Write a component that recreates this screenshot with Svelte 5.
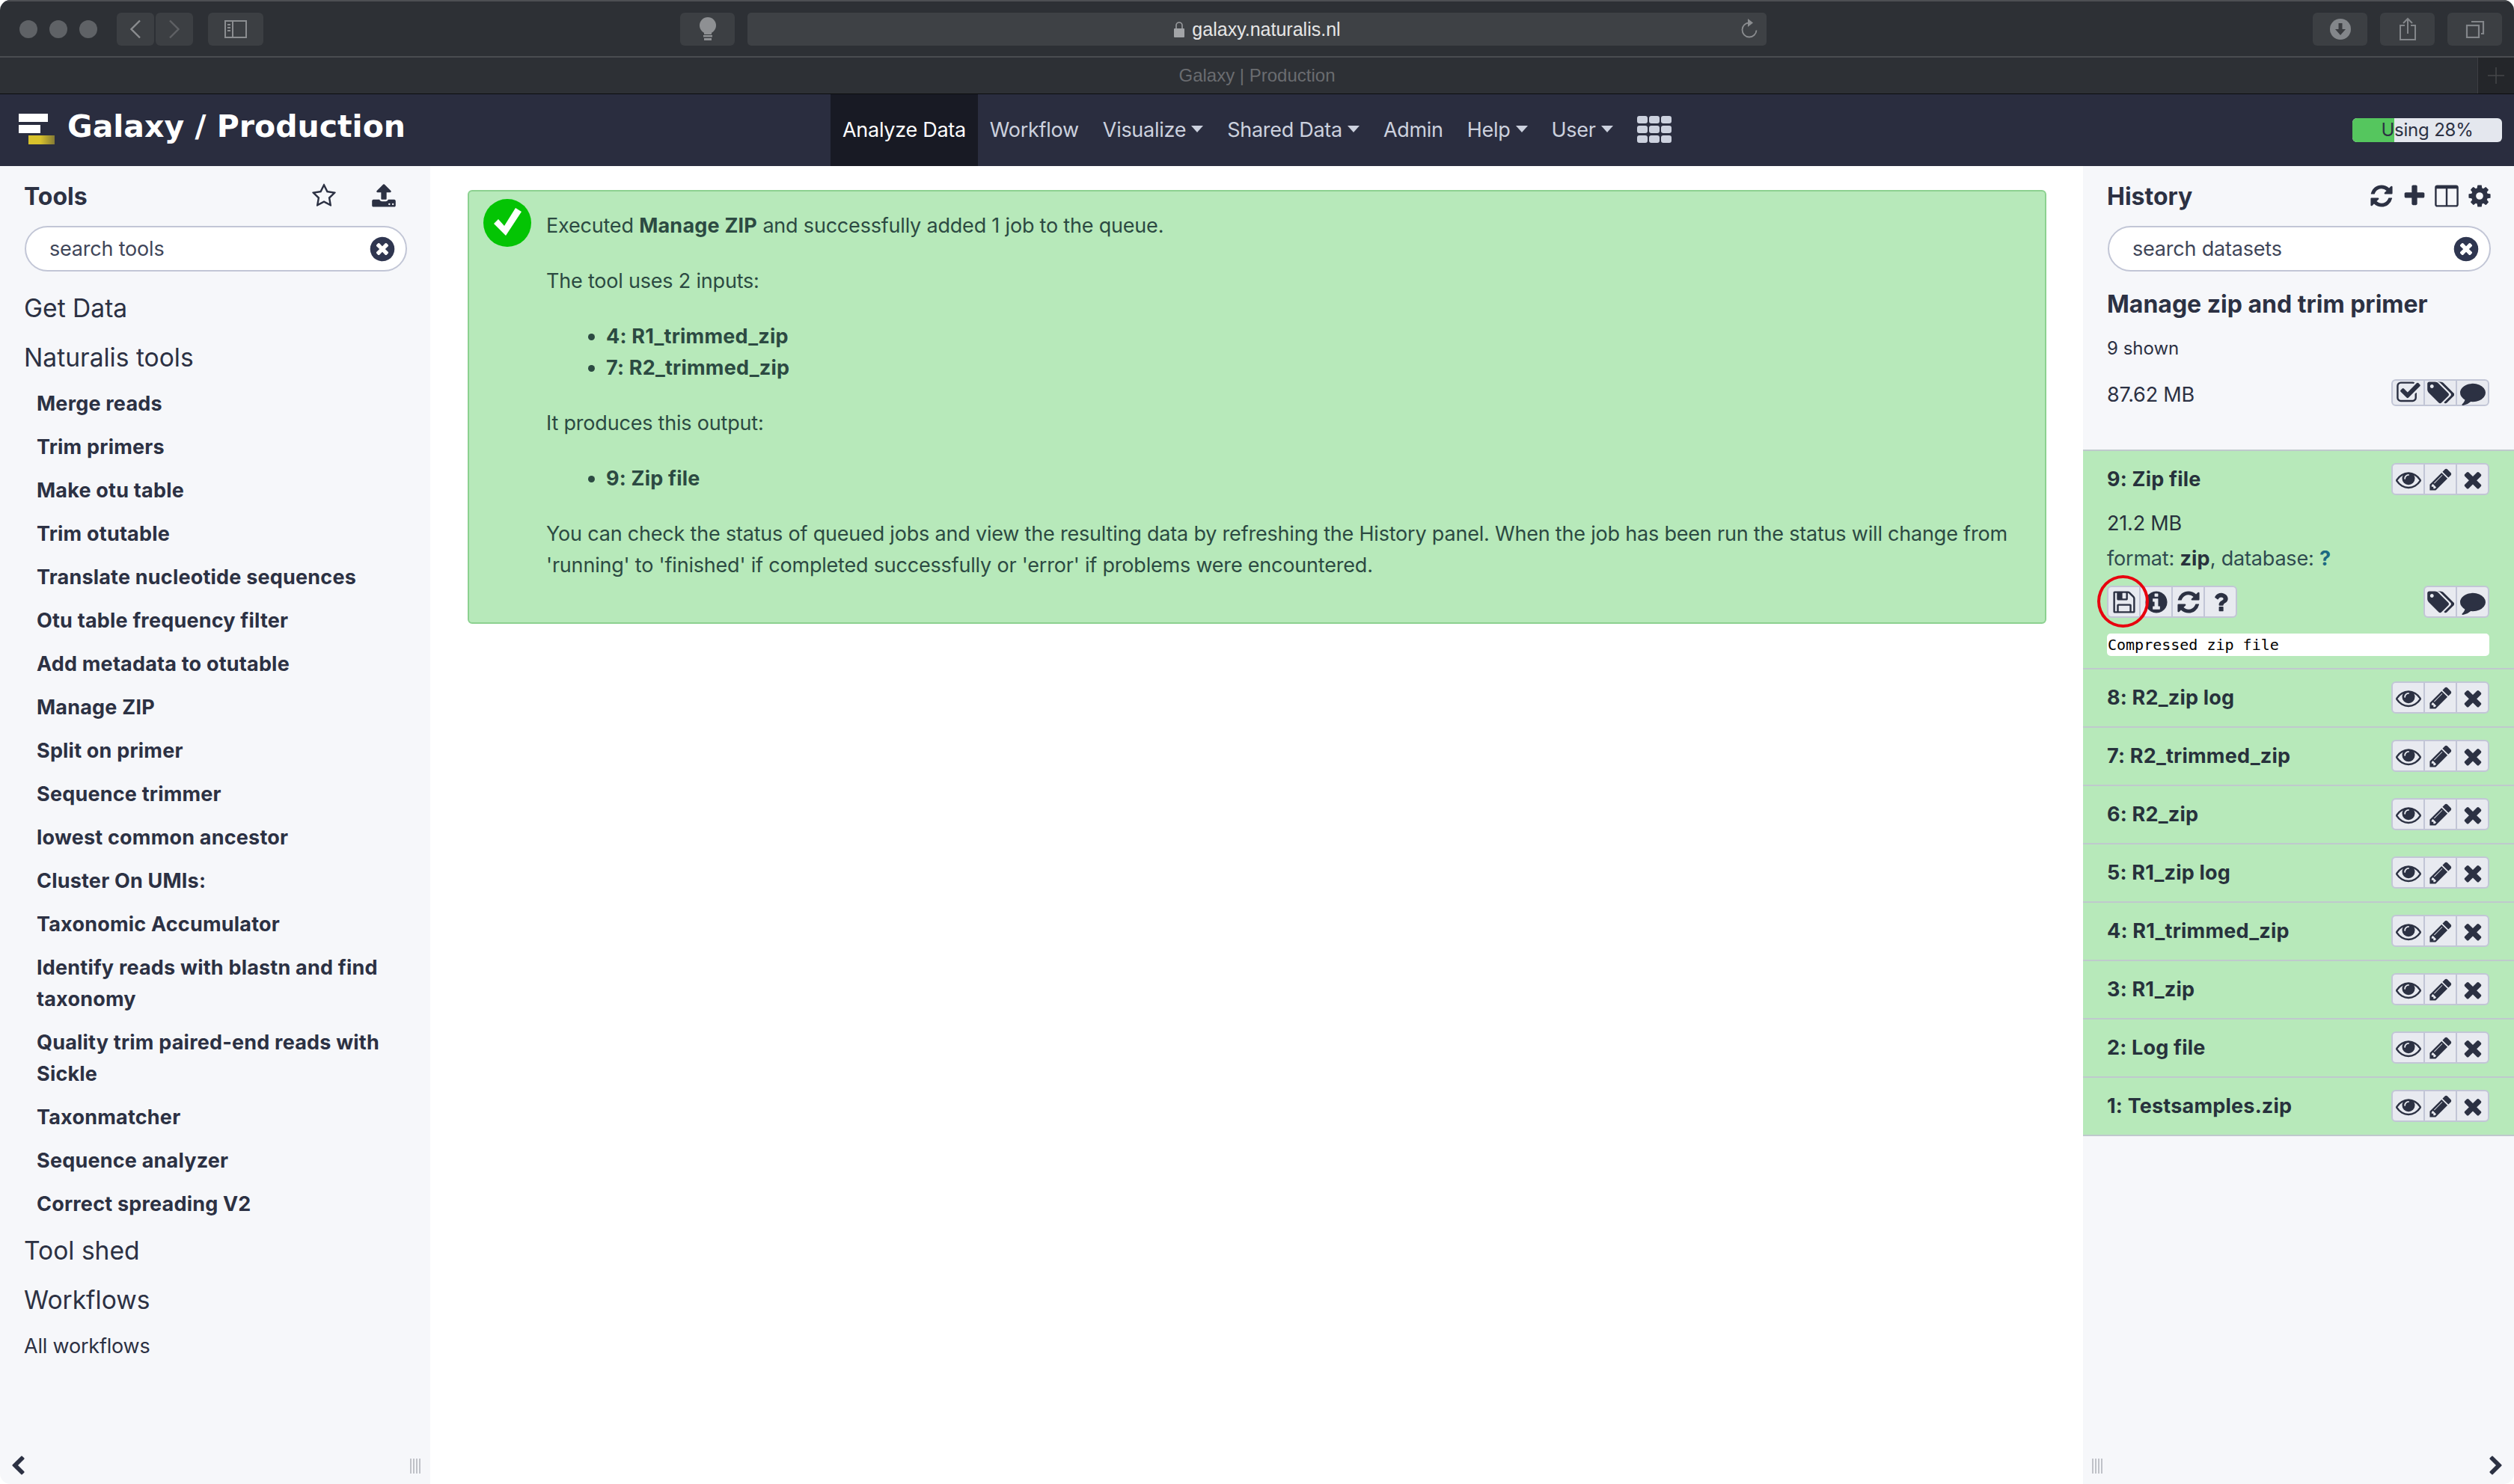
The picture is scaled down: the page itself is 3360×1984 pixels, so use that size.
<script>
	const fa = {
		eye: [1792, 'M1664 960q-152-236-381-353 61 104 61 225 0 185-131.5 316.5t-316.5 131.5-316.5-131.5-131.5-316.5q0-121 61-225-229 117-381 353 133 205 333.5 326.5t434.5 121.5 434.5-121.5 333.5-326.5zm-720-384q0-20-14-34t-34-14q-125 0-214.5 89.5t-89.5 214.5q0 20 14 34t34 14 34-14 14-34q0-86 61-147t147-61q20 0 34-14t14-34zm848 384q0 34-20 69-140 230-376.5 368.5t-499.5 138.5-499.5-139-376.5-368q-20-35-20-69t20-69q140-229 376.5-368t499.5-139 499.5 139 376.5 368q20 35 20 69z'],
		pencil: [1792, 'M491 1536l91-91-235-235-91 91v107h128v128h107zm523-928q0-22-22-22-10 0-17 7l-542 542q-7 7-7 17 0 22 22 22 10 0 17-7l542-542q7-7 7-17zm-54-192l416 416-832 832h-416v-416zm683 96q0 53-37 90l-166 166-416-416 166-165q36-38 90-38 53 0 91 38l235 234q37 39 37 91z'],
		times: [1792, 'M1490 1322q0 40-28 68l-136 136q-28 28-68 28t-68-28l-294-294-294 294q-28 28-68 28t-68-28l-136-136q-28-28-28-68t28-68l294-294-294-294q-28-28-28-68t28-68l136-136q28-28 68-28t68 28l294 294 294-294q28-28 68-28t68 28l136 136q28 28 28 68t-28 68l-294 294 294 294q28 28 28 68z'],
		save: [1792, 'M512 1536h768v-384h-768v384zm896 0h128v-896q0-14-10-38.5t-20-34.5l-281-281q-10-10-34-20t-39-10v416q0 40-28 68t-68 28h-576q-40 0-68-28t-28-68v-416h-128v1280h128v-416q0-40 28-68t68-28h832q40 0 68 28t28 68v416zm-384-928v-320q0-13-9.5-22.5t-22.5-9.5h-192q-13 0-22.5 9.5t-9.5 22.5v320q0 13 9.5 22.5t22.5 9.5h192q13 0 22.5-9.5t9.5-22.5zm640 32v928q0 40-28 68t-68 28h-1344q-40 0-68-28t-28-68v-1344q0-40 28-68t68-28h928q40 0 88 20t76 48l280 280q28 28 48 76t20 88z'],
		info: [1792, 'M1152 1376v-160q0-14-9-23t-23-9h-96v-512q0-14-9-23t-23-9h-320q-14 0-23 9t-9 23v160q0 14 9 23t23 9h96v320h-96q-14 0-23 9t-9 23v160q0 14 9 23t23 9h448q14 0 23-9t9-23zm-128-896v-160q0-14-9-23t-23-9h-192q-14 0-23 9t-9 23v160q0 14 9 23t23 9h192q14 0 23-9t9-23zm640 416q0 209-103 385.5t-279.5 279.5-385.5 103-385.5-103-279.5-279.5-103-385.5 103-385.5 279.5-279.5 385.5-103 385.5 103 279.5 279.5 103 385.5z'],
		refresh: [1792, 'M1639 1056q0 5-1 7-64 268-268 434.5t-478 166.5q-146 0-282.5-55t-243.5-157l-129 129q-19 19-45 19t-45-19-19-45v-448q0-26 19-45t45-19h448q26 0 45 19t19 45-19 45l-137 137q71 66 161 102t187 36q134 0 250-65t186-179q11-17 53-117 8-23 30-23h192q13 0 22.5 9.5t9.5 22.5zm25-800v448q0 26-19 45t-45 19h-448q-26 0-45-19t-19-45 19-45l138-138q-148-137-349-137-134 0-250 65t-186 179q-11 17-53 117-8 23-30 23h-199q-13 0-22.5-9.5t-9.5-22.5v-7q65-268 270-434.5t480-166.5q146 0 284 55.5t245 156.5l130-129q19-19 45-19t45 19 19 45z'],
		question: [1792, 'M1088 1256v240q0 16-12 28t-28 12h-240q-16 0-28-12t-12-28v-240q0-16 12-28t28-12h240q16 0 28 12t12 28zm316-600q0 54-15.5 101t-35 76.5-55 59.5-57.5 43.5-61 35.5q-41 23-68.5 65t-27.5 67q0 17-12 32.5t-28 15.5h-240q-15 0-25.5-18.5t-10.5-37.5v-45q0-83 65-156.5t143-108.5q59-27 84-56t25-76q0-42-46.5-74t-107.5-32q-65 0-108 29-35 25-107 115-13 16-31 16-12 0-25-8l-164-125q-13-10-15.5-25t5.5-28q160-266 464-266 80 0 161 31t146 83 106 127.5 41 158.5z'],
		tags: [1984, 'M512 448q0-53-37.5-90.5t-90.5-37.5-90.5 37.5-37.5 90.5 37.5 90.5 90.5 37.5 90.5-37.5 37.5-90.5zm1067 576q0 53-37 90l-491 492q-39 37-91 37-53 0-90-37l-715-716q-38-37-64.5-101t-26.5-117v-416q0-52 38-90t90-38h416q53 0 117 26.5t102 64.5l715 714q37 39 37 91zm384 0q0 53-37 90l-491 492q-39 37-91 37-36 0-59-14t-53-45l470-470q37-37 37-90 0-52-37-91l-715-714q-38-38-102-64.5t-117-26.5h224q53 0 117 26.5t102 64.5l715 714q37 39 37 91z'],
		comment: [1792, 'M1792 896q0 174-120 321.5t-326 233-450 85.5q-70 0-145-8-198 175-460 242-49 14-114 22-17 2-30.5-9t-17.5-29v-1q-3-4-.5-12t2-10 4.5-9.5l6-9 7-8.5 8-9q7-8 31-34.5t34.5-38 31-39.5 32.5-51 27-59 26-76q-157-89-247.5-220t-90.5-281q0-130 71-248.5t191-204.5 286-136.5 348-50.5q244 0 450 85.5t326 233 120 321.5z'],
		check: [1792, 'M1472 930v318q0 119-84.5 203.5t-203.5 84.5h-832q-119 0-203.5-84.5t-84.5-203.5v-832q0-119 84.5-203.5t203.5-84.5h832q63 0 117 25 15 7 18 23 3 17-9 29l-49 49q-10 10-23 10-3 0-9-2-23-6-45-6h-832q-66 0-113 47t-47 113v832q0 66 47 113t113 47h832q66 0 113-47t47-113v-254q0-13 9-22l64-64q10-10 23-10 6 0 12 3 20 8 20 29zm231-489l-814 814q-24 24-57 24t-57-24l-430-430q-24-24-24-57t24-57l110-110q24-24 57-24t57 24l263 263 647-647q24-24 57-24t57 24l110 110q24 24 24 57t-24 57z'],
		plus: [1792, 'M1600 736v192q0 40-28 68t-68 28h-416v416q0 40-28 68t-68 28h-192q-40 0-68-28t-28-68v-416h-416q-40 0-68-28t-28-68v-192q0-40 28-68t68-28h416v-416q0-40 28-68t68-28h192q40 0 68 28t28 68v416h416q40 0 68 28t28 68z'],
		columns: [1792, 'M224 1536h608v-1152h-640v1120q0 13 9.5 22.5t22.5 9.5zm1376-32v-1120h-640v1152h608q13 0 22.5-9.5t9.5-22.5zm128-1216v1216q0 66-47 113t-113 47h-1344q-66 0-113-47t-47-113v-1216q0-66 47-113t113-47h1344q66 0 113 47t47 113z'],
		cog: [1792, 'M1152 896q0-106-75-181t-181-75-181 75-75 181 75 181 181 75 181-75 75-181zm512-109v222q0 12-8 23t-20 13l-185 28q-19 54-39 91 35 50 107 138 10 12 10 25t-9 23q-27 37-99 108t-94 71q-12 0-26-9l-138-108q-44 23-91 38-16 136-29 186-7 28-36 28h-222q-14 0-24.5-8.5t-11.5-21.5l-28-184q-49-16-90-37l-141 107q-10 9-25 9-14 0-25-11-126-114-165-168-7-10-7-23 0-12 8-23 15-21 51-66.5t54-70.5q-27-50-41-99l-183-27q-13-2-21-12.5t-8-23.5v-222q0-12 8-23t19-13l186-28q14-46 39-92-40-57-107-138-10-12-10-24 0-10 9-23 26-36 98.5-107.5t94.5-71.5q13 0 26 10l138 107q44-23 91-38 16-136 29-186 7-28 36-28h222q14 0 24.5 8.5t11.5 21.5l28 184q49 16 90 37l142-107q9-9 24-9 13 0 25 10 129 119 165 170 7 8 7 22 0 12-8 23-15 21-51 66.5t-54 70.5q26 50 41 98l183 28q13 2 21 12.5t8 23.5z'],
		star: [1792, 'M1201 1004l306-297-422-62-189-382-189 382-422 62 306 297-73 421 378-199 377 199zm527-357q0 22-26 48l-363 354 86 500q1 7 1 20 0 50-41 50-19 0-40-12l-449-236-449 236q-22 12-40 12-21 0-31.5-14.5t-10.5-35.5q0-6 2-20l86-500-364-354q-25-27-25-48 0-37 56-46l502-73 225-455q19-41 49-41t49 41l225 455 502 73q56 9 56 46z'],
		upload: [1792, 'M1344 1472q0-26-19-45t-45-19-45 19-19 45 19 45 45 19 45-19 19-45zm256 0q0-26-19-45t-45-19-45 19-19 45 19 45 45 19 45-19 19-45zm128-224v320q0 40-28 68t-68 28h-1472q-40 0-68-28t-28-68v-320q0-40 28-68t68-28h427q21 56 70.5 92t110.5 36h256q61 0 110.5-36t70.5-92h427q40 0 68 28t28 68zm-325-648q-17 40-59 40h-256v448q0 26-19 45t-45 19h-256q-26 0-45-19t-19-45v-448h-256q-42 0-59-40-17-39 14-69l448-448q18-19 45-19t45 19l448 448q31 30 14 69z'],
		clear: [1792, 'M1277 1122q0-26-19-45l-181-181 181-181q19-19 19-45 0-27-19-46l-90-90q-19-19-46-19-26 0-45 19l-181 181-181-181q-19-19-45-19-27 0-46 19l-90 90q-19 19-19 46 0 26 19 45l181 181-181 181q-19 19-19 45 0 27 19 46l90 90q19 19 46 19 26 0 45-19l181-181 181 181q19 19 45 19 27 0 46-19l90-90q19-19 19-46zm387-226q0 209-103 385.5t-279.5 279.5-385.5 103-385.5-103-279.5-279.5-103-385.5 103-385.5 279.5-279.5 385.5-103 385.5 103 279.5 279.5 103 385.5z'],
		left: [1792, 'M1427 301l-531 531 531 531q19 19 19 45t-19 45l-166 166q-19 19-45 19t-45-19l-742-742q-19-19-19-45t19-45l742-742q19-19 45-19t45 19l166 166q19 19 19 45t-19 45z'],
		right: [1792, 'M1363 877l-742 742q-19 19-45 19t-45-19l-166-166q-19-19-19-45t19-45l531-531-531-531q-19-19-19-45t19-45l166-166q19-19 45-19t45 19l742 742q19 19 19 45t-19 45z']
	};

	const navLinks = [
		{ label: 'Analyze Data', active: true },
		{ label: 'Workflow' },
		{ label: 'Visualize', caret: true },
		{ label: 'Shared Data', caret: true },
		{ label: 'Admin' },
		{ label: 'Help', caret: true },
		{ label: 'User', caret: true }
	];

	const tools = [
		'Merge reads', 'Trim primers', 'Make otu table', 'Trim otutable', 'Translate nucleotide sequences',
		'Otu table frequency filter', 'Add metadata to otutable', 'Manage ZIP', 'Split on primer', 'Sequence trimmer',
		'lowest common ancestor', 'Cluster On UMIs:', 'Taxonomic Accumulator', 'Identify reads with blastn and find taxonomy',
		'Quality trim paired-end reads with Sickle', 'Taxonmatcher', 'Sequence analyzer', 'Correct spreading V2'
	];

	const datasets = ['8: R2_zip log', '7: R2_trimmed_zip', '6: R2_zip', '5: R1_zip log', '4: R1_trimmed_zip', '3: R1_zip', '2: Log file', '1: Testsamples.zip'];
</script>

{#snippet icon(name, size = 34)}
	<svg class="fa" width={size * fa[name][0] / 1792} height={size} viewBox="0 0 {fa[name][0]} 1792" fill="currentColor"><path d={fa[name][1]} /></svg>
{/snippet}

{#snippet group(names)}
	<div class="btn-group">
		{#each names as n}
			<span class="icon-btn">{@render icon(n)}</span>
		{/each}
	</div>
{/snippet}

<div class="window">
	<div class="toolbar">
		<div class="lights"><i></i><i></i><i></i></div>
		<div class="nav-pair">
			<span class="chrome-btn back">
				<svg width="16" height="26" viewBox="0 0 16 26" fill="none" stroke="#8b8d90" stroke-width="2.4"><path d="M14 1.5L2.5 13 14 24.5" /></svg>
			</span>
			<span class="chrome-btn back">
				<svg width="16" height="26" viewBox="0 0 16 26" fill="none" stroke="#5f6165" stroke-width="2.4"><path d="M2 1.5L13.5 13 2 24.5" /></svg>
			</span>
		</div>
		<span class="chrome-btn sidebar">
			<svg width="30" height="24" viewBox="0 0 30 24" fill="none" stroke="#8b8d90" stroke-width="2"><rect x="1" y="1" width="28" height="22" /><path d="M11 1v22" /><path d="M4 6h4M4 10h4M4 14h4" /></svg>
		</span>
		<span class="chrome-btn bulb">
			<svg width="24" height="32" viewBox="0 0 24 32" fill="#8e9093"><circle cx="12" cy="11" r="11" /><rect x="7" y="20" width="10" height="3" /><rect x="6" y="24" width="12" height="2.5" /><rect x="7" y="28" width="10" height="3" /></svg>
		</span>
		<div class="url">
			<svg width="16" height="22" viewBox="0 0 16 22" class="lock"><path d="M4 10V6a4 4 0 0 1 8 0v4" fill="none" stroke="#9a9c9f" stroke-width="1.6" /><rect x="1" y="10" width="14" height="12" rx="1" fill="#a2a4a7" /></svg>
			<span>galaxy.naturalis.nl</span>
			<svg class="reload" width="24" height="28" viewBox="0 0 24 28" fill="none" stroke="#8b8d90" stroke-width="1.8"><path d="M13 6.5a9.5 9.5 0 1 0 9.5 10" /><path d="M11 1l7 5.5-7 5.5z" fill="#8b8d90" stroke="none" /></svg>
		</div>
		<div class="chrome-right">
			<span class="chrome-btn wide">
				<svg width="28" height="28" viewBox="0 0 28 28"><circle cx="14" cy="14" r="14" fill="#83868a" /><path d="M11.5 6h5v8h4.500l-7 8-7-8h4.500z" fill="#3a3c40" /></svg>
			</span>
			<span class="chrome-btn wide">
				<svg width="24" height="32" viewBox="0 0 24 32" fill="none" stroke="#83868a" stroke-width="2"><path d="M8 11H2v19h20V11h-6" /><path d="M12 22V2M6 8l6-6 6 6" /></svg>
			</span>
			<span class="chrome-btn wide">
				<svg width="26" height="24" viewBox="0 0 26 24" fill="none" stroke="#83868a" stroke-width="2.2"><rect x="2" y="7" width="16" height="16" /><path d="M8 2h16v16h-3" /></svg>
			</span>
		</div>
	</div>
	<div class="tabbar">
		<span class="tab-title">Galaxy | Production</span>
		<span class="new-tab">
			<svg width="22" height="22" viewBox="0 0 22 22" stroke="#45474a" stroke-width="1.5"><path d="M11 0v22M0 11h22" /></svg>
		</span>
	</div>

	<nav class="navbar">
		<div class="brand">
			<svg class="logo" width="50" height="42" viewBox="0 0 50 42">
				<defs>
					<linearGradient id="logo-fade">
						<stop offset="0.45" stop-color="#d8c22c" />
						<stop offset="1" stop-color="#857a35" />
					</linearGradient>
				</defs>
				<rect x="0" y="0" width="39" height="11" fill="#fff" />
				<rect x="0" y="15" width="29" height="11" fill="#fff" />
				<rect x="13" y="29" width="35" height="12" fill="url(#logo-fade)" />
			</svg>
			<span class="brand-text">Galaxy / Production</span>
		</div>
		<ul class="nav-links">
			{#each navLinks as link}
				<li class:active={link.active}>{link.label}{#if link.caret}<i class="caret"></i>{/if}</li>
			{/each}
			<li class="apps">
				<div class="apps-grid">
					{#each Array(9) as _}<i></i>{/each}
				</div>
			</li>
		</ul>
		<div class="quota">
			<div class="quota-fill" style="width: 28%"></div>
			<span>Using 28%</span>
		</div>
	</nav>

	<div class="main">
		<aside class="panel left">
			<div class="panel-head">
				<h2>Tools</h2>
				<div class="head-icons tools-icons">
					{@render icon('star')}
					{@render icon('upload')}
				</div>
			</div>
			<div class="search">
				<span>search tools</span>
				<span class="clear">{@render icon('clear', 38)}</span>
			</div>
			<div class="section">Get Data</div>
			<div class="section">Naturalis tools</div>
			<div class="tool-list">
				{#each tools as t}
					<div class="tool">{t}</div>
				{/each}
			</div>
			<div class="section">Tool shed</div>
			<div class="section">Workflows</div>
			<div class="all-flows">All workflows</div>
			<span class="collapse cl">{@render icon('left', 28)}</span>
			<span class="grip gl"></span>
		</aside>

		<main class="center">
			<div class="alert">
				<svg class="ok" width="64" height="64" viewBox="0 0 64 64">
					<circle cx="32" cy="32" r="32" fill="#04c404" />
					<path d="M14 33l6-6 8 9 15-24 8 5-21 32z" fill="#fff" />
				</svg>
				<p>Executed <b>Manage ZIP</b> and successfully added 1 job to the queue.</p>
				<p>The tool uses 2 inputs:</p>
				<ul>
					<li><b>4: R1_trimmed_zip</b></li>
					<li><b>7: R2_trimmed_zip</b></li>
				</ul>
				<p>It produces this output:</p>
				<ul>
					<li><b>9: Zip file</b></li>
				</ul>
				<p>You can check the status of queued jobs and view the resulting data by refreshing the History panel. When the job has been run the status will change from 'running' to 'finished' if completed successfully or 'error' if problems were encountered.</p>
			</div>
		</main>

		<aside class="panel right">
			<div class="panel-head">
				<h2>History</h2>
				<div class="head-icons hist-icons">
					{@render icon('refresh')}
					{@render icon('plus')}
					{@render icon('columns')}
					{@render icon('cog')}
				</div>
			</div>
			<div class="search">
				<span>search datasets</span>
				<span class="clear">{@render icon('clear', 38)}</span>
			</div>
			<div class="hist-name">Manage zip and trim primer</div>
			<div class="shown">9 shown</div>
			<div class="hist-size">
				<span>87.62 MB</span>
				{@render group(['check', 'tags', 'comment'])}
			</div>

			<div class="datasets">
				<div class="dataset open">
					<div class="ds-head">
						<b>9: Zip file</b>
						{@render group(['eye', 'pencil', 'times'])}
					</div>
					<div class="ds-size">21.2 MB</div>
					<div class="ds-format">format: <b>zip</b>, database: <b class="unknown">?</b></div>
					<div class="ds-actions">
						{@render group(['save', 'info', 'refresh', 'question'])}
						{@render group(['tags', 'comment'])}
					</div>
					<div class="peek">Compressed zip file</div>
					<span class="highlight"></span>
				</div>
				{#each datasets as d}
					<div class="dataset">
						<div class="ds-head">
							<b>{d}</b>
							{@render group(['eye', 'pencil', 'times'])}
						</div>
					</div>
				{/each}
			</div>
			<span class="grip gr"></span>
			<span class="collapse cr">{@render icon('right', 28)}</span>
		</aside>
	</div>
</div>

<style>
	:global(body) {
		margin: 0;
		background: #fff;
	}

	.window {
		width: 3360px;
		height: 1984px;
		display: flex;
		flex-direction: column;
		overflow: hidden;
		border-radius: 14px;
		font-family: Inter, 'Liberation Sans', sans-serif;
		font-size: 27px;
		line-height: 42px;
		letter-spacing: -0.2px;
		color: #2c3143;
	}

	.window b {
		font-weight: 700;
		letter-spacing: 0.2px;
	}

	.fa {
		display: block;
		flex: none;
	}

	/* browser chrome */
	.toolbar {
		height: 73px;
		flex: none;
		display: flex;
		align-items: center;
		padding: 0 16px 0 26px;
		background: #2d3035;
		border-top: 2px solid #4d4f53;
	}

	.lights {
		display: flex;
		gap: 16px;
		width: 130px;
	}

	.lights i {
		width: 24px;
		height: 24px;
		border-radius: 50%;
		background: #5f6266;
	}

	.nav-pair {
		display: flex;
		gap: 2px;
	}

	.chrome-btn {
		display: flex;
		align-items: center;
		justify-content: center;
		height: 44px;
		border-radius: 6px;
		background: #3c3f43;
	}

	.back {
		width: 50px;
	}

	.sidebar {
		width: 74px;
		margin-left: 20px;
	}

	.bulb {
		width: 73px;
		margin-left: 557px;
	}

	.url {
		position: relative;
		width: 1362px;
		height: 44px;
		margin-left: 17px;
		display: flex;
		align-items: center;
		justify-content: center;
		gap: 9px;
		background: #3e4145;
		border-radius: 5px;
		font-family: 'Liberation Sans', sans-serif;
		font-size: 25px;
		letter-spacing: 0;
		color: #e6e6e6;
	}

	.reload {
		position: absolute;
		right: 12px;
		top: 7px;
	}

	.chrome-right {
		margin-left: auto;
		display: flex;
		gap: 17px;
	}

	.wide {
		width: 73px;
	}

	.tabbar {
		position: relative;
		height: 48px;
		flex: none;
		display: flex;
		align-items: center;
		justify-content: center;
		background: #2d3035;
		border-top: 2px solid #4a4c50;
		border-bottom: 1px solid #0c0d0f;
	}

	.tab-title {
		font-family: 'Liberation Sans', sans-serif;
		font-size: 24px;
		letter-spacing: 0;
		color: #6a6c70;
	}

	.new-tab {
		position: absolute;
		right: 0;
		top: 0;
		width: 48px;
		height: 48px;
		display: flex;
		align-items: center;
		justify-content: center;
		background: #24262a;
		border-left: 1px solid #3d3f43;
	}

	/* galaxy masthead */
	.navbar {
		position: relative;
		height: 96px;
		flex: none;
		display: flex;
		background: #2a2d3f;
	}

	.brand {
		display: flex;
		align-items: center;
		width: 1110px;
		padding: 0 0 10px 25px;
		box-sizing: border-box;
	}

	.logo {
		margin-right: 15px;
		margin-top: 8px;
	}

	.brand-text {
		font-family: 'DejaVu Sans', sans-serif;
		font-weight: 700;
		font-size: 41px;
		letter-spacing: 0;
		color: #fff;
		white-space: nowrap;
	}

	.nav-links {
		display: flex;
		margin: 0;
		padding: 0;
		list-style: none;
		color: #ccd1de;
		letter-spacing: -0.28px;
	}

	.nav-links li {
		display: flex;
		align-items: center;
		padding: 0 16px;
		height: 96px;
		padding-bottom: 1px;
		box-sizing: border-box;
	}

	.nav-links li.active {
		background: #181a24;
		color: #fff;
	}

	.caret {
		width: 0;
		height: 0;
		margin-left: 7px;
		margin-bottom: 3px;
		border-left: 8px solid transparent;
		border-right: 8px solid transparent;
		border-top: 9px solid #ccd1de;
	}

	.apps-grid {
		display: grid;
		grid-template-columns: repeat(3, 14px);
		grid-auto-rows: 10px;
		gap: 3px 2px;
		margin-top: -2px;
	}

	.apps-grid i {
		background: #ccd1de;
		border-radius: 3px;
		height: 10px;
	}

	.quota {
		position: absolute;
		right: 16px;
		top: 32px;
		width: 200px;
		height: 32px;
		border-radius: 6px;
		overflow: hidden;
		background: #e4e7ee;
		display: flex;
		align-items: center;
		justify-content: center;
		color: #2c3143;
		font-size: 24px;
	}

	.quota-fill {
		position: absolute;
		left: 0;
		top: 0;
		bottom: 0;
		background: #55c65e;
	}

	.quota span {
		position: relative;
	}

	/* layout */
	.main {
		flex: 1;
		display: flex;
		min-height: 0;
	}

	.panel {
		position: relative;
		flex: none;
		box-sizing: border-box;
		background: #f6f7fa;
	}

	.panel.left {
		width: 575px;
		padding: 15px 0 0 0;
	}

	.panel.right {
		width: 576px;
		padding: 15px 0 0 0;
	}

	.panel-head {
		display: flex;
		align-items: center;
		justify-content: space-between;
		height: 50px;
		padding: 0 31px 0 32px;
	}

	.panel-head h2 {
		margin: 2px 0 0;
		font-size: 32px;
		line-height: 50px;
		font-weight: 700;
		letter-spacing: 0;
	}

	.head-icons {
		display: flex;
		align-items: center;
	}

	.tools-icons {
		gap: 46px;
		margin-right: 14px;
	}

	.hist-icons {
		gap: 9.6px;
		margin-right: -2px;
	}

	.search {
		display: flex;
		align-items: center;
		justify-content: space-between;
		height: 61px;
		margin: 15px 31px 16px 33px;
		padding: 0 12px 0 31px;
		box-sizing: border-box;
		background: #fff;
		border: 2px solid #c2c6d6;
		border-radius: 31px;
		color: #3f4659;
	}

	.clear {
		color: #2f3650;
	}

	.section {
		padding: 8px 32px;
		font-size: 33.6px;
		line-height: 50px;
		letter-spacing: 0;
	}

	.tool {
		padding: 8px 32px 8px 49px;
		font-weight: 700;
		letter-spacing: 0.2px;
	}

	.all-flows {
		padding: 8px 32px;
	}

	.collapse {
		position: absolute;
		bottom: 10px;
	}

	.cl {
		left: 10px;
	}

	.cr {
		right: 10px;
	}

	.grip {
		position: absolute;
		bottom: 14px;
		width: 16px;
		height: 20px;
		background: repeating-linear-gradient(90deg, #c0c2c8 0 2px, #f6f7fa 2px 4px);
	}

	.gl {
		left: 548px;
	}

	.gr {
		left: 12px;
	}

	/* message */
	.center {
		flex: 1;
		padding: 32px 49px 0 50px;
		background: #fff;
	}

	.alert {
		position: relative;
		box-sizing: border-box;
		padding: 25px 48px 23px 103px;
		background: #b7e9ba;
		border: 2px solid #8cd190;
		border-radius: 6px;
		color: #2c4a42;
	}

	.ok {
		position: absolute;
		left: 19px;
		top: 10px;
	}

	.alert p {
		margin: 0 0 32px;
	}

	.alert ul {
		margin: 0 0 32px;
		padding-left: 80px;
	}

	/* history */
	.hist-name {
		padding: 0 32px;
		margin-top: 19px;
		font-size: 32px;
		line-height: 50px;
		font-weight: 700;
		letter-spacing: 0;
	}

	.shown {
		padding: 0 32px;
		margin-top: 16px;
		font-size: 24px;
		line-height: 36px;
		letter-spacing: 0;
	}

	.hist-size {
		display: flex;
		align-items: flex-start;
		justify-content: space-between;
		margin-top: 16px;
		padding: 0 33px 0 32px;
	}

	.hist-size span {
		margin-top: 7px;
	}

	.btn-group {
		display: flex;
		height: 43px;
	}

	.icon-btn {
		display: flex;
		align-items: center;
		justify-content: center;
		width: 45px;
		box-sizing: border-box;
		margin-left: -2px;
		background: #e8eaf0;
		border: 2px solid #c2c6d6;
		color: #2c3143;
	}

	.icon-btn:first-child {
		margin-left: 0;
		border-radius: 6px 0 0 6px;
	}

	.icon-btn:last-child {
		border-radius: 0 6px 6px 0;
	}

	.datasets {
		margin-top: 52px;
		border-bottom: 2px solid #bfc9cd;
	}

	.dataset {
		position: relative;
		box-sizing: border-box;
		height: 78px;
		padding: 16px 33px 0 32px;
		background: #b7e9ba;
		border-top: 2px solid #bfc9cd;
		color: #27323c;
	}

	.dataset.open {
		height: 292px;
	}

	.ds-head {
		display: flex;
		align-items: center;
		justify-content: space-between;
		height: 43px;
	}

	.ds-size {
		margin-top: 17px;
	}

	.ds-format {
		margin-top: 5px;
		color: #2f4b50;
	}

	.ds-format b {
		color: #27323c;
	}

	.window .ds-format .unknown {
		color: #1c6a82;
	}

	.ds-actions {
		display: flex;
		justify-content: space-between;
		margin-top: 15px;
	}

	.peek {
		margin-top: 21px;
		height: 30px;
		padding-left: 1px;
		background: #fff;
		border-radius: 5px;
		font-family: 'DejaVu Sans Mono', monospace;
		font-size: 20px;
		line-height: 30px;
		letter-spacing: 0;
		color: #000;
	}

	.highlight {
		position: absolute;
		left: 19px;
		top: 166px;
		width: 69px;
		height: 70px;
		box-sizing: border-box;
		border: 4px solid #e8000e;
		border-radius: 50%;
	}
</style>
